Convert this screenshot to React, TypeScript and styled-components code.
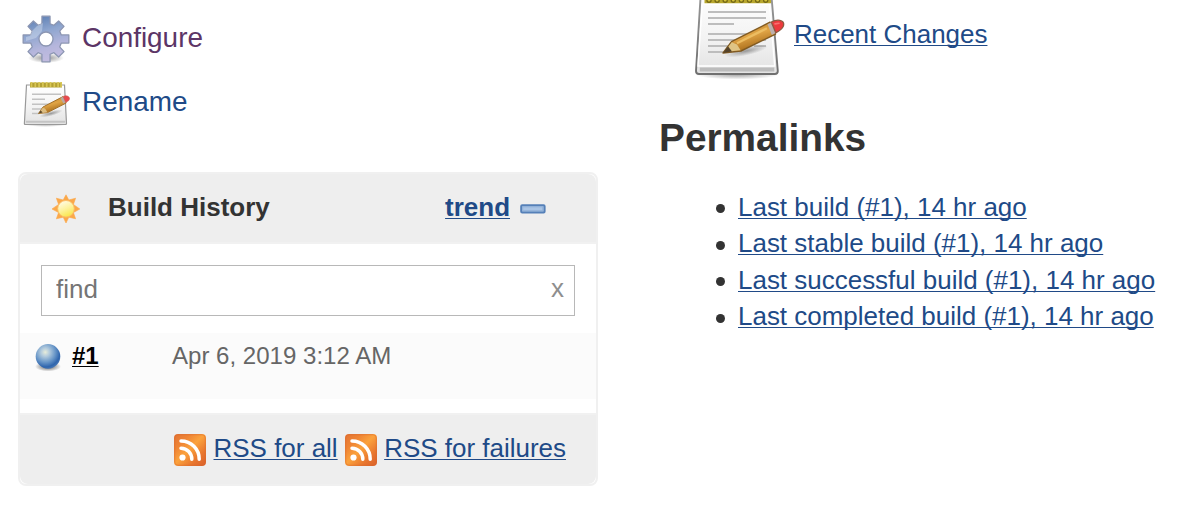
import React from "react";
import styled, { createGlobalStyle, css } from "styled-components";

const Global = createGlobalStyle`
  * { box-sizing: border-box; }
  body {
    margin: 0;
    background: #fff;
    color: #333;
    font: 26px/30px "Liberation Sans", Helvetica, Arial, sans-serif;
    overflow: hidden;
  }
`;

const Page = styled.div`
  display: grid;
  grid-template-columns: 580px 1fr;
  column-gap: 61px;
  width: 1180px;
  height: 510px;
  padding-left: 18px;
  overflow: hidden;
`;

const Link = styled.a<{ $bold?: boolean; $color?: string }>`
  color: ${(p) => p.$color ?? "#204a87"};
  font-weight: ${(p) => (p.$bold ? 700 : 400)};
  font-size: ${(p) => (p.$color ? "24px" : "25.97px")};
  text-decoration: underline 1px;
  text-decoration-skip-ink: none;
  text-underline-offset: 2px;
  white-space: nowrap;
  cursor: pointer;
`;

const Side = styled.aside`
  display: flex;
  flex-direction: column;
`;

const Tasks = styled.nav`
  display: flex;
  flex-direction: column;
  gap: 16px;
  padding: 15px 0 0 4px;
  height: 172px;
`;

const Task = styled.a<{ $visited?: boolean }>`
  display: flex;
  gap: 12px;
  height: 48px;
  font-size: 27.9px;
  line-height: 46px;
  color: ${(p) => (p.$visited ? "#5c3566" : "#204a87")};
  cursor: pointer;
`;

const Panel = styled.section`
  display: flex;
  flex-direction: column;
  height: 314px;
  border: 2px solid #f0f0f0;
  border-radius: 8px;
  background: #fff;
`;

const bar = css`
  display: flex;
  background: #eee;
`;

const PanelHeader = styled.header`
  ${bar}
  height: 70px;
  padding: 18px 50.5px 0 30px;
  border-bottom: 2px solid #f1f1f1;
  border-radius: 8px 8px 0 0;
`;

const Title = styled.h3`
  flex: 1;
  margin: 0 0 0 26px;
  font-size: 26px;
  line-height: 30px;
`;

const Collapse = styled.button`
  display: flex;
  padding: 12px 0 0;
  margin-left: 9.5px;
  border: 0;
  background: none;
`;

const Search = styled.label`
  display: flex;
  align-items: flex-start;
  height: 51px;
  margin: 21px 21px 0 21px;
  padding: 8px 10px 0 14px;
  border: 1px solid #b8b8b8;
`;

const Input = styled.input`
  flex: 1;
  min-width: 0;
  height: 30px;
  padding: 0;
  border: 0;
  outline: 0;
  background: none;
  font: inherit;
  &::placeholder { color: #757575; opacity: 1; }
`;

const Clear = styled.span`
  color: #8e8e8e;
  margin-top: -1px;
`;

const BuildRow = styled.div`
  display: flex;
  height: 66px;
  margin-top: 17px;
  padding: 9px 0 0 14px;
  background: #fbfbfb;
  font-size: 24px;
  line-height: 28px;
`;

const BuildNumber = styled.div`
  width: 100px;
  margin-left: 8px;
`;

const BuildDate = styled.time`
  color: #666;
  font-size: 24.06px;
`;

const PanelFooter = styled.footer`
  ${bar}
  height: 71px;
  margin-top: auto;
  padding: 18px 30px 0 0;
  border-top: 2px solid #f1f1f1;
  border-radius: 0 0 8px 8px;
  justify-content: flex-end;
  gap: 7px;
`;

const Feed = styled.div`
  display: flex;
  gap: 8px;
  &:last-child { gap: 7.5px; }
`;

const Main = styled.main`
  display: flex;
  flex-direction: column;
`;

const Changes = styled.div`
  display: flex;
  gap: 8px;
  height: 82px;
  padding-left: 31px;
  & > a { margin-top: 19px; }
`;

const Heading = styled.h2`
  margin: 33px 0 0;
  font-size: 38.8px;
  line-height: 45px;
`;

const Links = styled.ul`
  list-style: none;
  margin: 28.7px 0 0;
  padding: 0 0 0 57px;
`;

const Item = styled.li`
  display: flex;
  align-items: center;
  gap: 13px;
  height: 36.4px;
  &::before {
    content: "";
    width: 9px;
    height: 9px;
    margin-top: 4px;
    border-radius: 50%;
    background: #333;
  }
`;

const Glyph = styled.svg<{ $top?: number }>`
  display: block;
  flex: none;
  margin-top: ${(p) => p.$top ?? 0}px;
`;

const Soft = styled.g`
  filter: blur(0.5px);
`;

/* Eight straight-sided teeth around a round body. */
const gearOutline = Array.from({ length: 8 }, (_, i) => {
  const point = (radius: number, degrees: number) => {
    const a = ((i * 45 + degrees - 90) * Math.PI) / 180;
    return `${(24 + radius * Math.cos(a)).toFixed(2)} ${(24 + radius * Math.sin(a)).toFixed(2)}`;
  };
  const tip = i % 2 ? 22 : 23.2;
  return `${i ? "L" : "M"}${point(15.8, -15)}L${point(tip, -10)}L${point(tip, 10)}L${point(15.8, 15)}`;
}).join("");

const GearIcon = () => (
  <Glyph width="48" height="49" viewBox="0 0 48 49">
    <defs>
      <linearGradient id="gear" x1="0.3" y1="0" x2="0.6" y2="1">
        <stop offset="0" stopColor="#5d7fb4" />
        <stop offset="0.35" stopColor="#8fa6cf" />
        <stop offset="0.7" stopColor="#b5b6dc" />
        <stop offset="1" stopColor="#c4bce0" />
      </linearGradient>
      <radialGradient id="gearShade">
        <stop offset="0" stopColor="#444" stopOpacity="0.6" />
        <stop offset="1" stopColor="#444" stopOpacity="0" />
      </radialGradient>
    </defs>
    <Soft>
      <ellipse cx="24" cy="43" rx="18" ry="5" fill="url(#gearShade)" />
      <path
        fill="url(#gear)"
        stroke="#8c96b2"
        strokeWidth="1.3"
        strokeLinejoin="round"
        fillRule="evenodd"
        d={`${gearOutline}ZM24 17a7 7 0 1 0 0 14 7 7 0 0 0 0-14z`}
      />
      <path d="M8 21l2-5 5-5 6-3-1 8-6 7-10 3v-4z" fill="#dbe5f5" opacity="0.4" />
    </Soft>
  </Glyph>
);

const PaperDefs = ({ id }: { id: string }) => (
  <defs>
    <linearGradient id={`${id}Paper`} x1="0" y1="0" x2="0" y2="1">
      <stop offset="0" stopColor="#fff" />
      <stop offset="0.55" stopColor="#f3f3f3" />
      <stop offset="1" stopColor="#e2e2e2" />
    </linearGradient>
    <linearGradient id={`${id}Edge`} x1="0" y1="0" x2="0" y2="1">
      <stop offset="0" stopColor="#999" />
      <stop offset="1" stopColor="#6f6f6f" />
    </linearGradient>
    <linearGradient id={`${id}Wood`} x1="0.3" y1="0.2" x2="0.6" y2="0.85">
      <stop offset="0" stopColor="#c98e34" />
      <stop offset="0.4" stopColor="#e0a445" />
      <stop offset="1" stopColor="#a96d1b" />
    </linearGradient>
    <radialGradient id={`${id}Shade`}>
      <stop offset="0" stopColor="#333" stopOpacity="0.45" />
      <stop offset="1" stopColor="#333" stopOpacity="0" />
    </radialGradient>
  </defs>
);

const RenameIcon = () => (
  <Glyph width="48" height="48" viewBox="0 0 48 48">
    <PaperDefs id="rename" />
    <Soft>
      <ellipse cx="23.5" cy="45" rx="22" ry="3" fill="url(#renameShade)" />
      <path d="M4.5 6h38l2 38.5q0 1-1 1H3.4q-1 0-1-1z" fill="url(#renamePaper)" stroke="#999" strokeWidth="1.2" />
      <path d="M4 42.7h39" stroke="#c4c4c4" strokeWidth="2" />
      <path d="M8 3.5h32v5H8z" fill="#b3a033" />
      <path d="M9.5 3v5m3.8-5v5m3.8-5v5m3.8-5v5m3.8-5v5m3.8-5v5m3.8-5v5m3.8-5v5m3-5v5" stroke="#d8c654" strokeWidth="1.7" />
      <path d="M10 15.3h29M10 20.3h13M10 25.3h23M10 30h14M10 34.5h7" stroke="#c2c2c2" strokeWidth="1.5" />
      <ellipse cx="29" cy="34.5" rx="12" ry="2.5" transform="rotate(-15 29 34.5)" fill="url(#renameShade)" />
      <path d="M16.5 34.5l4.5-6.5L41 17.6l3.2 6.4-18.7 9.6z" fill="url(#renameWood)" stroke="#a3712b" strokeWidth="1" strokeLinejoin="round" />
      <path d="M16.5 34.5l4.5-6 2.2 1.2 2.2 3.5z" fill="#dcbd82" />
      <path d="M16.5 34.5l2.2-3 2 2z" fill="#5b4628" />
      <path d="M38.5 19l3-1.5 2.8 5.6-3 1.5z" fill="#b8aaa2" />
      <path d="M41.2 17.5c4-2.2 8.3 1.2 5.3 4.2l-2.8 1.8z" fill="#e9494c" stroke="#c65b52" strokeWidth=".6" />
    </Soft>
  </Glyph>
);

const NotepadIcon = () => (
  <Glyph width="96" height="79" viewBox="0 17 96 79">
    <PaperDefs id="notes" />
    <Soft>
      <ellipse cx="47" cy="91.5" rx="42" ry="5" fill="url(#notesShade)" />
      <path d="M10.8 10h70.4l6.6 78q0 3-3 3H9q-3 0-3-3z" fill="url(#notesPaper)" stroke="url(#notesEdge)" strokeWidth="1.9" />
      <path d="M12.3 21h67.2l5.2 62H8z" fill="none" stroke="#fff" strokeWidth="1.4" />
      <path d="M9.8 84.5h74.5v4H9.8z" fill="#bcbcbc" />
      <path d="M14.5 10h66.5v10.2H14.5z" fill="#b8a72e" />
      <path
        d="M19 10v7.2m8.1-7.2v7.2m8.1-7.2v7.2m8.1-7.2v7.2m8.1-7.2v7.2m8.1-7.2v7.2m8.1-7.2v7.2m8.1-7.2v7.2"
        stroke="#756916"
        strokeWidth="5.4"
        strokeLinecap="round"
      />
      <path
        d="M19 10v7.2m8.1-7.2v7.2m8.1-7.2v7.2m8.1-7.2v7.2m8.1-7.2v7.2m8.1-7.2v7.2m8.1-7.2v7.2m8.1-7.2v7.2"
        stroke="#d5c23c"
        strokeWidth="2.8"
        strokeLinecap="round"
      />
      <path d="M18 29h58M18 35h58M18 41h26M18 51h45M18 57h32M18 63h25M18 69h18M64 63h12M58 57h18" stroke="#bdbdbd" strokeWidth="1.9" />
      <ellipse cx="56" cy="68" rx="22" ry="4.5" transform="rotate(-12 56 68)" fill="url(#notesShade)" />
      <path d="M33 70l8.5-11.4L80 39.2l5.5 12L51 68z" fill="url(#notesWood)" stroke="#805a22" strokeWidth="1.4" strokeLinejoin="round" />
      <path d="M34.5 69l7.2-9.8 5.3 2.2 3.6 5.8z" fill="#dfc485" />
      <path d="M33 70l5-6.8 4 5.3z" fill="#55432a" />
      <path d="M47 60.2l30-15" stroke="#ecbd62" strokeWidth="2.4" />
      <path d="M77.5 41.2l4.5-2.3 4.2 10.8-4.4 2.2z" fill="#bdb0ad" />
      <path d="M81.3 39c5.5-3 13-2.6 12.4 3-.4 3.2-4 5.8-7.9 7.8z" fill="#ed3a3d" stroke="#8f5a40" strokeWidth="1.3" />
      <path d="M85 40.9l4-.6" stroke="#f8716f" strokeWidth="1.6" strokeLinecap="round" />
    </Soft>
  </Glyph>
);

const SunIcon = () => (
  <Glyph width="32" height="32" viewBox="0 0 32 32" $top={1}>
    <defs>
      <linearGradient id="sun" x1="0.2" y1="0.1" x2="0.6" y2="1">
        <stop offset="0" stopColor="#fffbe0" />
        <stop offset="0.5" stopColor="#fdf29b" />
        <stop offset="1" stopColor="#f9e548" />
      </linearGradient>
    </defs>
    <Soft>
      <path
        d="M16 1.8l2.8 5.2 6.8-1.8-2.2 6.2 6.4 4.6-6.4 3.6 2.2 6.2-6.8-1.6L16 30l-2.8-5.8-6.8 1.6 2.2-6.2L2 16l6.6-4.6-2.2-6.2L13.2 7z"
        fill="#fba849"
        stroke="#fba849"
        strokeWidth=".6"
      />
      <circle cx="16" cy="15.8" r="8.3" fill="url(#sun)" stroke="#f9bd66" strokeWidth=".9" />
    </Soft>
  </Glyph>
);

const MinusIcon = () => (
  <Glyph width="26" height="10" viewBox="0 0 26 10">
    <Soft>
      <rect x="1.2" y="1.2" width="23.4" height="7.4" rx="1" fill="#a9c4e5" stroke="#5580b8" strokeWidth="2" />
      <rect x="2.8" y="2.9" width="19.9" height="3.8" fill="none" stroke="#8fb0d8" strokeWidth=".8" />
    </Soft>
  </Glyph>
);

const BallIcon = () => (
  <Glyph width="30" height="32" viewBox="0 0 30 32">
    <defs>
      <radialGradient id="ball" cx="0.39" cy="0.33" r="0.68">
        <stop offset="0" stopColor="#e8edda" />
        <stop offset="0.25" stopColor="#b3cbdd" />
        <stop offset="0.6" stopColor="#6896c8" />
        <stop offset="0.88" stopColor="#2f65ad" />
        <stop offset="1" stopColor="#4374b4" />
      </radialGradient>
      <radialGradient id="ballShade">
        <stop offset="0.3" stopColor="#333" stopOpacity="0.6" />
        <stop offset="1" stopColor="#333" stopOpacity="0" />
      </radialGradient>
    </defs>
    <Soft>
      <ellipse cx="14" cy="24.5" rx="13" ry="5" fill="url(#ballShade)" />
      <circle cx="14" cy="14.4" r="12.3" fill="url(#ball)" />
    </Soft>
  </Glyph>
);

const RssIcon = ({ id }: { id: string }) => (
  <Glyph width="32" height="32" viewBox="0 0 32 32" $top={1}>
    <defs>
      <linearGradient id={id} x1="0" y1="0" x2="1" y2="1">
        <stop offset="0" stopColor="#e27334" />
        <stop offset="0.25" stopColor="#ee8334" />
        <stop offset="0.48" stopColor="#fba23d" />
        <stop offset="0.75" stopColor="#e8762e" />
        <stop offset="1" stopColor="#d9602b" />
      </linearGradient>
    </defs>
    <rect width="32" height="32" rx="4" fill={`url(#${id})`} />
    <rect x=".7" y=".7" width="30.6" height="30.6" rx="3.5" fill="none" stroke="#d9682e" strokeOpacity=".45" />
    <Soft>
      <circle cx="8.5" cy="23.5" r="3.1" fill="#fff" />
      <path d="M7 14.2a10.8 10.8 0 0 1 10.8 11.1M7 6.9a18.2 18.2 0 0 1 18.2 18.4" fill="none" stroke="#fff" strokeWidth="3.5" strokeLinecap="round" />
    </Soft>
  </Glyph>
);

const permalinks = [
  "Last build (#1), 14 hr ago",
  "Last stable build (#1), 14 hr ago",
  "Last successful build (#1), 14 hr ago",
  "Last completed build (#1), 14 hr ago",
];

export default function App() {
  return (
    <Page>
      <Global />
      <Side>
        <Tasks>
          <Task $visited>
            <GearIcon />
            Configure
          </Task>
          <Task>
            <RenameIcon />
            Rename
          </Task>
        </Tasks>
        <Panel>
          <PanelHeader>
            <SunIcon />
            <Title>Build History</Title>
            <Link $bold>trend</Link>
            <Collapse aria-label="collapse">
              <MinusIcon />
            </Collapse>
          </PanelHeader>
          <Search>
            <Input placeholder="find" />
            <Clear>x</Clear>
          </Search>
          <BuildRow>
            <BallIcon />
            <BuildNumber>
              <Link $bold $color="#000">#1</Link>
            </BuildNumber>
            <BuildDate>Apr 6, 2019 3:12 AM</BuildDate>
          </BuildRow>
          <PanelFooter>
            <Feed>
              <RssIcon id="rssAll" />
              <Link>RSS for all</Link>
            </Feed>
            <Feed>
              <RssIcon id="rssFail" />
              <Link>RSS for failures</Link>
            </Feed>
          </PanelFooter>
        </Panel>
      </Side>
      <Main>
        <Changes>
          <NotepadIcon />
          <Link>Recent Changes</Link>
        </Changes>
        <Heading>Permalinks</Heading>
        <Links>
          {permalinks.map((label) => (
            <Item key={label}>
              <Link>{label}</Link>
            </Item>
          ))}
        </Links>
      </Main>
    </Page>
  );
}
